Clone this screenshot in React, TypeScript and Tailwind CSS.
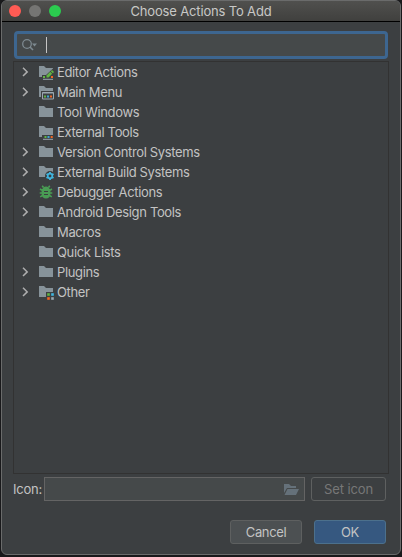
import React from "react";

type IconKind = "folder" | "edit" | "menu" | "tools" | "gear" | "bug" | "other";

interface Item {
  label: string;
  expandable: boolean;
  icon: IconKind;
}

const items: Item[] = [
  { label: "Editor Actions", expandable: true, icon: "edit" },
  { label: "Main Menu", expandable: true, icon: "menu" },
  { label: "Tool Windows", expandable: false, icon: "folder" },
  { label: "External Tools", expandable: false, icon: "tools" },
  { label: "Version Control Systems", expandable: true, icon: "folder" },
  { label: "External Build Systems", expandable: true, icon: "gear" },
  { label: "Debugger Actions", expandable: true, icon: "bug" },
  { label: "Android Design Tools", expandable: true, icon: "folder" },
  { label: "Macros", expandable: false, icon: "folder" },
  { label: "Quick Lists", expandable: false, icon: "folder" },
  { label: "Plugins", expandable: true, icon: "folder" },
  { label: "Other", expandable: true, icon: "other" },
];

function TreeIcon({ kind }: { kind: IconKind }) {
  if (kind === "bug") {
    return (
      <svg width="16" height="16" viewBox="0 0 16 16" className="shrink-0">
        <path d="M5.5 3.5 4.2 1.8M10.5 3.5l1.3-1.7M4 6.2 2 5M12 6.2 14 5M4 9H1.7M12 9h2.3M4.5 11.5l-2.3 1.4M11.5 11.5l2.3 1.4" stroke="#499c54" strokeWidth="1.6" fill="none" />
        <path d="M4.5 5.5C4.5 3.6 6 2.4 8 2.4s3.5 1.2 3.5 3.1z" fill="#499c54" />
        <path d="M3.6 5h8.8v5c0 2.6-1.9 4.5-4.4 4.5S3.6 12.600 3.6 10z" fill="#499c54" />
        <path d="M6 7.5h4M6 10.500h4" stroke="#3c3f41" strokeWidth="1" />
      </svg>
    );
  }
  return (
    <svg width="16" height="16" viewBox="0 0 16 16" className="shrink-0">
      <path d="M1 2h5l2 2h7v9H1z" fill="#87939a" />
      {kind === "edit" && (
        <>
          <path d="M4 11h4l7-6.500h1V16H4z" fill="#3c3f41" />
          <rect x="5" y="12" width="2" height="2" fill="#62b543" />
          <rect x="13" y="12" width="2" height="2" fill="#f26522" />
          <path d="M8.500 13.500v-2l3.700-3.700 2 2-3.700 3.700z" fill="#62b543" />
          <path d="m12.800 7.200 1.200-1.200 2 2-1.200 1.200z" fill="#62b543" />
          <path d="M5 15.300h10" stroke="#9aa7b0" />
        </>
      )}
      {kind === "menu" && (
        <>
          <rect x="3" y="7" width="13" height="9" fill="#3c3f41" />
          <path d="M4.500 8.500h11v6.500h-11zM4.500 9h11" fill="none" stroke="#9aa7b0" />
          <rect x="6" y="11.500" width="2" height="2" fill="#62b543" />
          <rect x="9" y="11.500" width="2" height="2" fill="#40a5d5" />
          <rect x="12" y="11.500" width="2" height="2" fill="#f26522" />
        </>
      )}
      {kind === "tools" && (
        <>
          <rect x="4" y="11" width="12" height="5" fill="#3c3f41" />
          <rect x="6.500" y="12" width="2" height="2" fill="#62b543" />
          <rect x="9.500" y="12" width="2" height="2" fill="#40a5d5" />
          <rect x="12.700" y="12" width="2" height="2" fill="#f26522" />
          <path d="M5 15.300h10" stroke="#9aa7b0" />
        </>
      )}
      {kind === "gear" && (
        <>
          <circle cx="12" cy="12" r="5" fill="#3c3f41" />
          <circle cx="12" cy="12" r="2.300" fill="none" stroke="#40b6e0" strokeWidth="1.700" />
          <path d="M12 8v1.500M12 14.500V16M8.500 10l1.300.8M14.200 13.200l1.300.8M8.500 14l1.300-.8M14.200 10.800l1.300-.8" stroke="#40b6e0" strokeWidth="1.800" />
        </>
      )}
      {kind === "other" && (
        <>
          <rect x="8" y="8" width="8" height="8" fill="#3c3f41" />
          <rect x="9.200" y="9.200" width="2.600" height="2.600" fill="#62b543" />
          <rect x="13.200" y="9.200" width="2.600" height="2.600" fill="#40b6e0" />
          <rect x="9.200" y="13.200" width="2.600" height="2.600" fill="#f26522" />
          <rect x="13.200" y="13.200" width="2.600" height="2.600" fill="#9aa7b0" />
        </>
      )}
    </svg>
  );
}

function TreeRow({ item }: { item: Item }) {
  return (
    <div className="flex h-5 items-center">
      <div className="flex w-6 shrink-0">
        {item.expandable && (
          <svg width="16" height="16" viewBox="0 0 16 16" className="ml-[3px]">
            <path d="m6 3.800 4.200 4.100L6 12" fill="none" stroke="#adadad" strokeWidth="1.500" />
          </svg>
        )}
      </div>
      <TreeIcon kind={item.icon} />
      <span className="ml-[3px] whitespace-nowrap">{item.label}</span>
    </div>
  );
}

export default function App() {
  return (
    <div className="h-[557px] w-[402px] overflow-hidden bg-[#19191b] pl-px font-['Inter','Liberation_Sans',sans-serif] text-[13px] leading-5 tracking-[-0.35px] text-[#c3c3c3]">
      <div className="flex h-[555px] w-[400px] flex-col overflow-hidden rounded-[6px] border border-[#6a6b6b] bg-[#3c3f41]">
        <header className="flex h-[21px] shrink-0 items-center border-b border-black bg-linear-to-b from-[#50504e] to-[#40403e]">
          <div className="flex w-[60px] gap-2 pl-[7px]">
            <span className="size-3 rounded-full bg-[#ff5b54]" />
            <span className="size-3 rounded-full bg-[#757573]" />
            <span className="size-3 rounded-full bg-[#2bcb4f]" />
          </div>
          <h1 className="grow pr-[60px] text-center text-[13px] font-normal tracking-[-0.16px] text-[#c8c8c6]">Choose Actions To Add</h1>
        </header>
        <div className="mx-3 mt-[9px] flex h-7 shrink-0 items-center rounded-[4px] border-[3px] border-[#3d6690] bg-[#45494a]">
          <svg width="18" height="16" viewBox="0 0 18 16" className="ml-[3px]">
            <circle cx="7" cy="7" r="4.300" fill="none" stroke="#7d8990" strokeWidth="1.300" />
            <path d="m10 10 3 3" stroke="#7d8990" strokeWidth="1.600" />
            <path d="M12 6.500h5l-2.500 3z" fill="#7d8990" />
          </svg>
          <span className="ml-2 h-4 w-px bg-[#c5c5c5]" />
        </div>
        <div className="mx-[11px] mt-[2px] h-[413px] shrink-0 border border-[#323232]">
          {items.map((item) => (
            <TreeRow key={item.label} item={item} />
          ))}
        </div>
        <div className="mt-[3px] flex h-6 shrink-0 items-center pl-[11px]">
          <span className="w-[31px] shrink-0 tracking-[-0.2px]">Icon:</span>
          <div className="flex h-6 w-[261px] items-center justify-end border border-[#646464] bg-[#45494a] pr-[5px]">
            <svg width="16" height="14" viewBox="0 0 16 14">
              <path d="M1 2h5l2 2h5v2H4L1 11z" fill="#65717a" />
              <path d="M4.500 7H16l-3 6H1.500z" fill="#65717a" />
            </svg>
          </div>
          <button className="ml-[6px] h-6 w-[75px] rounded-[3px] border border-[#5e6060] tracking-[-0.1px] text-[#777777]">Set icon</button>
        </div>
        <div className="mt-[19px] flex gap-3 pl-[228px]">
          <button className="h-6 w-[72px] rounded-[3px] border border-[#5e6060] bg-[#4c5052]">Cancel</button>
          <button className="h-6 w-[72px] rounded-[3px] border border-[#4c708c] bg-[#365880]">OK</button>
        </div>
      </div>
    </div>
  );
}
